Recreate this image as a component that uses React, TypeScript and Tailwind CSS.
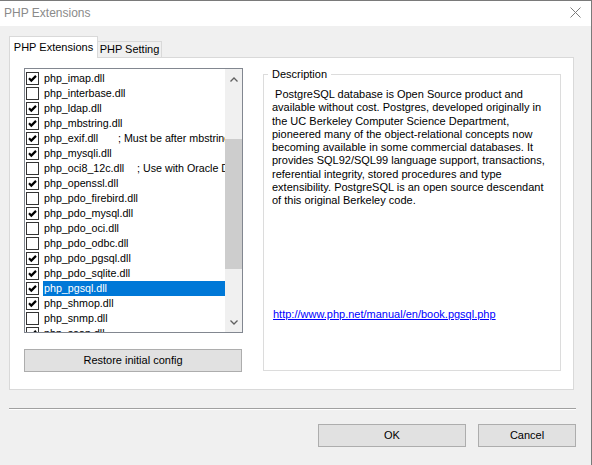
import React from "react";

type Ext = { name: string; on: boolean; note?: string; nameW?: string; sel?: boolean };

const exts: Ext[] = [
  { name: "php_imap.dll", on: true },
  { name: "php_interbase.dll", on: false },
  { name: "php_ldap.dll", on: true },
  { name: "php_mbstring.dll", on: true },
  { name: "php_exif.dll", on: true, note: "; Must be after mbstring as it depends on it", nameW: "w-[74px]" },
  { name: "php_mysqli.dll", on: true },
  { name: "php_oci8_12c.dll", on: false, note: "; Use with Oracle Database 12c Instant Client", nameW: "w-[93px]" },
  { name: "php_openssl.dll", on: true },
  { name: "php_pdo_firebird.dll", on: false },
  { name: "php_pdo_mysql.dll", on: true },
  { name: "php_pdo_oci.dll", on: false },
  { name: "php_pdo_odbc.dll", on: false },
  { name: "php_pdo_pgsql.dll", on: true },
  { name: "php_pdo_sqlite.dll", on: true },
  { name: "php_pgsql.dll", on: true, sel: true },
  { name: "php_shmop.dll", on: true },
  { name: "php_snmp.dll", on: false },
  { name: "php_soap.dll", on: true },
];

const desc = [
  "\u00a0PostgreSQL database is Open Source product and",
  "available without cost. Postgres, developed originally in",
  "the UC Berkeley Computer Science Department,",
  "pioneered many of the object-relational concepts now",
  "becoming available in some commercial databases. It",
  "provides SQL92/SQL99 language support, transactions,",
  "referential integrity, stored procedures and type",
  "extensibility. PostgreSQL is an open source descendant",
  "of this original Berkeley code.",
];

function CheckBox({ on }: { on: boolean }) {
  return (
    <span className="ml-[1px] flex h-[13px] w-[13px] shrink-0 items-center justify-center border border-[#333333] bg-white">
      {on && (
        <svg width="11" height="11" viewBox="0 0 11 11">
          <polyline points="2,5.3 4.3,7.6 9,2.9" fill="none" stroke="#000" strokeWidth="2.2" />
        </svg>
      )}
    </span>
  );
}

function Btn({ label, w }: { label: string; w: string }) {
  return (
    <button className={`${w} flex h-[23px] items-center justify-center border border-[#adadad] bg-[#e1e1e1] text-black`}>
      {label}
    </button>
  );
}

export default function App() {
  return (
    <div className="flex h-[465px] w-[592px] flex-col overflow-hidden border-t border-r border-[#7a7a7a] bg-[#f0f0f0] font-['Liberation_Sans',Arial,sans-serif] text-[11px] text-black">
      {/* title bar */}
      <div className="flex h-[25px] shrink-0 items-center justify-between bg-white pl-[4px] pr-[10px]">
        <span className="-mt-[1px] text-[12px] text-[#8a8a8a]">PHP Extensions</span>
        <svg width="11" height="11" viewBox="0 0 11 11" className="-mt-[2px]">
          <path d="M0.5 0.5 L10.5 10.5 M10.5 0.5 L0.5 10.5" stroke="#7c7c7c" strokeWidth="1" />
        </svg>
      </div>

      <div className="px-[9px] pt-[10px]">
        {/* tabs */}
        <div className="relative z-10 -mb-px flex h-[22px] items-end">
          <div className="flex h-[22px] w-[89px] items-center justify-center border border-b-0 border-[#d9d9d9] bg-white pb-[1px]">
            PHP Extensions
          </div>
          <div className="flex h-[17px] w-[64px] items-center justify-center border border-l-0 border-[#d9d9d9] bg-[#f0f0f0] pb-[1px]">
            PHP Setting
          </div>
        </div>

        {/* panel */}
        <div className="flex h-[333px] w-[565px] border border-[#d9d9d9] bg-white pl-[14px] pt-[10px]">
          <div className="flex w-[219px] flex-col">
            <div className="flex h-[265px] border border-[#828790] bg-white">
              <div className="flex w-[200px] flex-col overflow-hidden pt-[2px] text-[10.7px]">
                {exts.map((e) => (
                  <div key={e.name} className="flex h-[15px] shrink-0 items-center gap-[4px]">
                    <CheckBox on={e.on} />
                    <div
                      className={`flex h-[15px] min-w-0 flex-1 items-center overflow-hidden whitespace-nowrap pl-[1px] ${
                        e.sel ? "bg-[#0078d7] text-white" : ""
                      }`}
                    >
                      <span className={`shrink-0 ${e.nameW ?? ""}`}>{e.name}</span>
                      {e.note && <span className="shrink-0">{e.note}</span>}
                    </div>
                  </div>
                ))}
              </div>
              {/* scrollbar */}
              <div className="flex w-[17px] flex-col bg-[#f0f0f0]">
                <div className="flex h-[17px] items-center justify-center pt-[3px]">
                  <svg width="8" height="5" viewBox="0 0 8 5">
                    <polyline points="0.5,4.5 4,1 7.5,4.5" fill="none" stroke="#606060" strokeWidth="1.3" />
                  </svg>
                </div>
                <div className="flex flex-1 flex-col">
                  <div className="h-[53px]" />
                  <div className="h-[130px] bg-[#cdcdcd]" />
                </div>
                <div className="flex h-[17px] items-center justify-center pb-[2px]">
                  <svg width="8" height="5" viewBox="0 0 8 5">
                    <polyline points="0.5,0.5 4,4 7.5,0.5" fill="none" stroke="#606060" strokeWidth="1.3" />
                  </svg>
                </div>
              </div>
            </div>
            <div className="mt-[16px]">
              <Btn label="Restore initial config" w="w-[218px]" />
            </div>
          </div>

          {/* description group */}
          <div className="relative ml-[20px] mt-[6px] h-[297px] w-[298px] border border-[#dcdcdc] pl-[8px] pt-[13px]">
            <span className="absolute -top-[8px] left-[4px] bg-white px-[4px] leading-[15px]">Description</span>
            <div className="leading-[13.3px] whitespace-nowrap">
              {desc.map((l, i) => (
                <div key={i}>{l}</div>
              ))}
            </div>
            <a className="mt-[100px] ml-[1px] block leading-[13px] text-[#0000ff] underline" href="#">
              http://www.php.net/manual/en/book.pgsql.php
            </a>
          </div>
        </div>
      </div>

      {/* separator */}
      <div className="ml-[9px] mt-[18px] h-[2px] w-[567px] border-t border-b border-t-[#a0a0a0] border-b-white" />

      {/* buttons */}
      <div className="mt-[14px] flex justify-end gap-[12px] pr-[15px]">
        <Btn label="OK" w="w-[148px]" />
        <Btn label="Cancel" w="w-[98px]" />
      </div>
    </div>
  );
}
